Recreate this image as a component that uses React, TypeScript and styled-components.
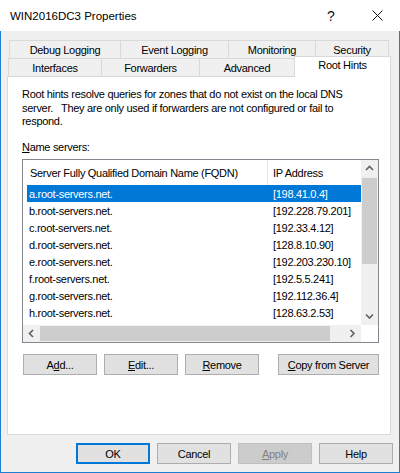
import React from "react";
import styled, { createGlobalStyle } from "styled-components";

const Global = createGlobalStyle`
  html, body { margin: 0; padding: 0; background: #ffffff; }
  * { box-sizing: border-box; }
  body {
    font-family: "Liberation Sans", Arial, sans-serif;
    font-size: 11px;
    letter-spacing: -0.3px;
    color: #000;
  }
`;

const Window = styled.div`
  width: 400px;
  height: 473px;
  display: flex;
  flex-direction: column;
  background: #fff;
`;

const TitleBar = styled.div`
  height: 31px;
  display: flex;
  align-items: center;
  background: #fff;
  flex: none;
`;

const TitleText = styled.div`
  flex: 1;
  padding-left: 10px;
  font-size: 11.5px;
  letter-spacing: 0;
  padding-top: 1px;
`;

const CaptionButton = styled.div`
  width: 46px;
  height: 30px;
  display: flex;
  align-items: center;
  justify-content: center;
  font-size: 14px;
  letter-spacing: 0;
  color: #111;
`;

const Body = styled.div`
  flex: 1;
  display: flex;
  flex-direction: column;
  background: #f0f0f0;
  border: 1px solid #1c7fd2;
  border-top: none;
  padding: 0 6px 0 6px;
`;

const TabArea = styled.div`
  margin-top: 9px;
  display: flex;
  flex-direction: column;
`;

const TabRow = styled.div<{ $indent: number }>`
  display: flex;
  height: 18px;
  margin-left: ${(p) => p.$indent}px;
  align-items: flex-start;
`;

const Tab = styled.div<{ $w: number; $active?: boolean }>`
  width: ${(p) => p.$w}px;
  height: ${(p) => (p.$active ? 21 : 18)}px;
  margin-top: ${(p) => (p.$active ? -2 : 0)}px;
  margin-bottom: ${(p) => (p.$active ? -1 : 0)}px;
  z-index: ${(p) => (p.$active ? 2 : 1)};
  position: relative;
  background: ${(p) => (p.$active ? "#ffffff" : "#f0f0f0")};
  border: 1px solid #d9d9d9;
  border-bottom: none;
  display: flex;
  align-items: ${(p) => (p.$active ? "flex-start" : "center")};
  padding-top: ${(p) => (p.$active ? 2 : 0)}px;
  justify-content: center;
  white-space: nowrap;
  & + & { margin-left: -1px; }
`;

const Panel = styled.div`
  width: 384px;
  height: 359px;
  background: #fff;
  border: 1px solid #d9d9d9;
  padding: 11px 11px 0 14px;
  display: flex;
  flex-direction: column;
`;

const Para = styled.div`
  line-height: 13.5px;
  white-space: pre;
`;

const Label = styled.div`
  margin-top: 12px;
  line-height: 13.5px;
`;

const U = styled.span`
  text-decoration: underline;
  text-underline-offset: 1px;
`;

const ListBox = styled.div`
  margin-top: 5px;
  width: 357px;
  height: 184px;
  border: 1px solid #828790;
  display: grid;
  grid-template-columns: 1fr 17px;
  grid-template-rows: 1fr 17px;
  background: #fff;
`;

const ListMain = styled.div`
  overflow: hidden;
  display: flex;
  flex-direction: column;
`;

const Header = styled.div`
  height: 25px;
  display: flex;
  align-items: stretch;
  flex: none;
`;

const HeaderCell = styled.div<{ $w?: number; $pad: number }>`
  ${(p) => (p.$w ? `width: ${p.$w}px; border-right: 1px solid #e5e5e5;` : "flex: 1;")}
  padding-left: ${(p) => p.$pad}px;
  display: flex;
  align-items: center;
  padding-top: 1px;
  white-space: nowrap;
`;

const Row = styled.div<{ $selected?: boolean }>`
  height: 17px;
  margin-left: 4px;
  display: flex;
  align-items: center;
  background: ${(p) => (p.$selected ? "#0078d7" : "transparent")};
  color: ${(p) => (p.$selected ? "#ffffff" : "#000000")};
  flex: none;
  white-space: nowrap;
`;

const Cell = styled.div<{ $w?: number; $pad: number }>`
  ${(p) => (p.$w ? `width: ${p.$w}px;` : "flex: 1;")}
  padding-left: ${(p) => p.$pad}px;
`;

const VScroll = styled.div`
  background: #f0f0f0;
  display: flex;
  flex-direction: column;
`;

const HScroll = styled.div`
  background: #f0f0f0;
  display: flex;
`;

const Corner = styled.div`
  background: #ffffff;
`;

const ArrowBox = styled.div`
  width: 17px;
  height: 17px;
  flex: none;
  display: flex;
  align-items: center;
  justify-content: center;
`;

const VThumb = styled.div`
  margin: 1px 1px 0 1px;
  height: 86px;
  background: #cdcdcd;
  flex: none;
`;

const HThumb = styled.div`
  margin: 1px 0 1px 0;
  width: 290px;
  background: #cdcdcd;
  flex: none;
`;

const Spacer = styled.div`
  flex: 1;
`;

const ButtonRow = styled.div`
  margin-top: 11px;
  padding-left: 1px;
  width: 357px;
  display: flex;
  gap: 7px;
`;

const Button = styled.div<{ $w?: number; $push?: boolean; $default?: boolean; $disabled?: boolean }>`
  width: ${(p) => p.$w ?? 74}px;
  height: 21px;
  margin-left: ${(p) => (p.$push ? "auto" : "0")};
  background: ${(p) => (p.$disabled ? "#cccccc" : "#e1e1e1")};
  border: ${(p) =>
    p.$default ? "2px solid #0078d7" : p.$disabled ? "1px solid #bfbfbf" : "1px solid #adadad"};
  color: ${(p) => (p.$disabled ? "#838383" : "#000")};
  display: flex;
  align-items: center;
  justify-content: center;
  white-space: nowrap;
`;

const Footer = styled.div`
  margin-top: 8px;
  display: flex;
  justify-content: flex-end;
  gap: 7px;
  padding-right: 0px;
`;

const Chevron = ({ dir }: { dir: "up" | "down" | "left" | "right" }) => {
  const pts: Record<string, string> = {
    up: "1,5 4.5,1.5 8,5",
    down: "1,1.5 4.5,5 8,1.5",
    left: "5,1 1.5,4.5 5,8",
    right: "1.5,1 5,4.5 1.5,8",
  };
  const vert = dir === "up" || dir === "down";
  return (
    <svg width={vert ? 9 : 7} height={vert ? 7 : 9} viewBox={vert ? "0 0 9 7" : "0 0 7 9"}>
      <polyline points={pts[dir]} fill="none" stroke="#606060" strokeWidth="1.6" />
    </svg>
  );
};

const servers = [
  ["a.root-servers.net.", "[198.41.0.4]"],
  ["b.root-servers.net.", "[192.228.79.201]"],
  ["c.root-servers.net.", "[192.33.4.12]"],
  ["d.root-servers.net.", "[128.8.10.90]"],
  ["e.root-servers.net.", "[192.203.230.10]"],
  ["f.root-servers.net.", "[192.5.5.241]"],
  ["g.root-servers.net.", "[192.112.36.4]"],
  ["h.root-servers.net.", "[128.63.2.53]"],
];

export default function App() {
  return (
    <>
      <Global />
      <Window>
        <TitleBar>
          <TitleText>WIN2016DC3 Properties</TitleText>
          <CaptionButton>?</CaptionButton>
          <CaptionButton>
            <svg width="11" height="11" viewBox="0 0 11 11">
              <path d="M0.5 0.5 L10.5 10.5 M10.5 0.5 L0.5 10.5" stroke="#111" strokeWidth="1" />
            </svg>
          </CaptionButton>
        </TitleBar>
        <Body>
          <TabArea>
            <TabRow $indent={2}>
              <Tab $w={112}>Debug Logging</Tab>
              <Tab $w={109}>Event Logging</Tab>
              <Tab $w={88}>Monitoring</Tab>
              <Tab $w={74}>Security</Tab>
            </TabRow>
            <TabRow $indent={1}>
              <Tab $w={94}>Interfaces</Tab>
              <Tab $w={99}>Forwarders</Tab>
              <Tab $w={96}>Advanced</Tab>
              <Tab $w={97} $active>
                Root Hints
              </Tab>
            </TabRow>
          </TabArea>
          <Panel>
            <Para>
              {"Root hints resolve queries for zones that do not exist on the local DNS\nserver.   They are only used if forwarders are not configured or fail to\nrespond."}
            </Para>
            <Label>
              <U>N</U>ame servers:
            </Label>
            <ListBox>
              <ListMain>
                <Header>
                  <HeaderCell $w={245} $pad={7}>
                    Server Fully Qualified Domain Name (FQDN)
                  </HeaderCell>
                  <HeaderCell $pad={5}>IP Address</HeaderCell>
                </Header>
                {servers.map(([name, ip], i) => (
                  <Row key={name} $selected={i === 0}>
                    <Cell $w={241} $pad={2}>
                      {name}
                    </Cell>
                    <Cell $pad={5}>{ip}</Cell>
                  </Row>
                ))}
              </ListMain>
              <VScroll>
                <ArrowBox>
                  <Chevron dir="up" />
                </ArrowBox>
                <VThumb />
                <Spacer />
                <ArrowBox>
                  <Chevron dir="down" />
                </ArrowBox>
              </VScroll>
              <HScroll>
                <ArrowBox>
                  <Chevron dir="left" />
                </ArrowBox>
                <HThumb />
                <Spacer />
                <ArrowBox>
                  <Chevron dir="right" />
                </ArrowBox>
              </HScroll>
              <Corner />
            </ListBox>
            <ButtonRow>
              <Button>
                A<U>d</U>d...
              </Button>
              <Button>
                <U>E</U>dit...
              </Button>
              <Button>
                <U>R</U>emove
              </Button>
              <Button $w={101} $push>
                <U>C</U>opy from Server
              </Button>
            </ButtonRow>
          </Panel>
          <Footer>
            <Button $default>OK</Button>
            <Button>Cancel</Button>
            <Button $disabled>
              <U>A</U>pply
            </Button>
            <Button>Help</Button>
          </Footer>
        </Body>
      </Window>
    </>
  );
}
